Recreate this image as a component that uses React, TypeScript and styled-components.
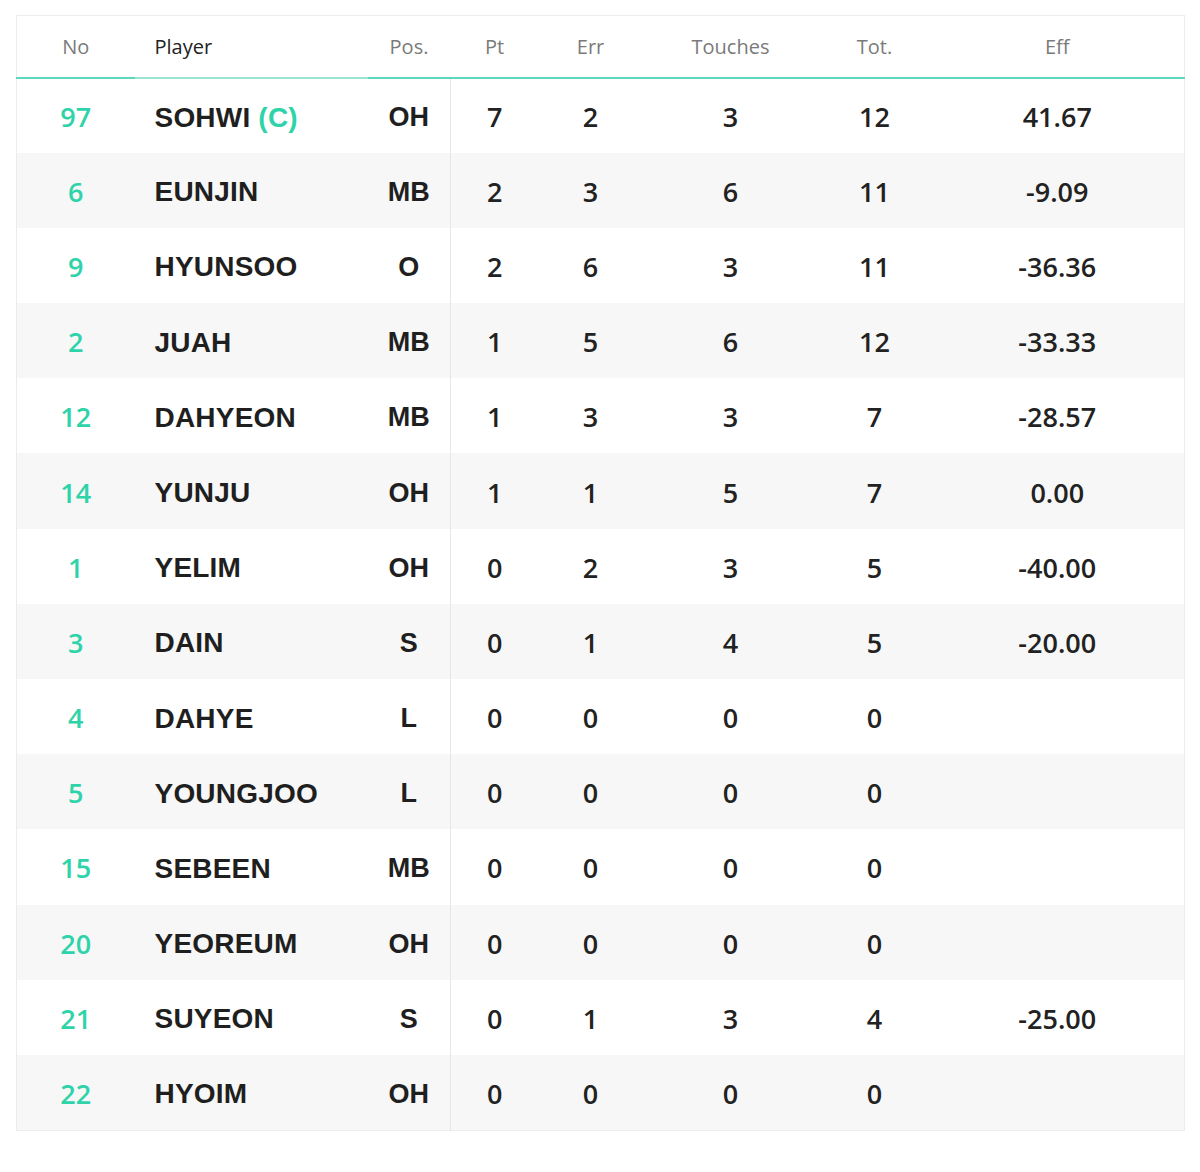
import React from "react";
import styled, { createGlobalStyle } from "styled-components";

const Global = createGlobalStyle`
  html, body { margin: 0; padding: 0; background: #fff; }
  body { font-family: "Open Sans", "Liberation Sans", sans-serif; }
`;

const Page = styled.div`
  padding: 15px 16px 40px 16px;
`;

const Table = styled.table`
  width: 1168px;
  border-collapse: collapse;
  border: 1px solid #ececec;
  table-layout: fixed;
`;

const Th = styled.th<{ $w: number; $align?: string; $dark?: boolean; $light?: boolean }>`
  box-sizing: border-box;
  width: ${(p) => p.$w}px;
  height: 62px;
  padding: 0;
  padding-left: ${(p) => (p.$align === "left" ? "20px" : "0")};
  text-align: ${(p) => p.$align || "center"};
  font-family: "Open Sans", "Liberation Sans", sans-serif;
  font-size: 20px;
  font-weight: 400;
  color: ${(p) => (p.$dark ? "#222" : "#7a7a7a")};
  border-bottom: 2px solid ${(p) => (p.$light ? "#9be3d3" : "#5fd6be")};
`;

const Tr = styled.tr<{ $alt: boolean }>`
  height: 75.2px;
  background: ${(p) => (p.$alt ? "#f7f7f7" : "#ffffff")};
`;

const Td = styled.td<{ $align?: string; $divider?: boolean }>`
  padding: 2px 0 0 0;
  padding-left: ${(p) => (p.$align === "left" ? "20px" : "0")};
  text-align: ${(p) => p.$align || "center"};
  font-family: "Open Sans", "Liberation Sans", sans-serif;
  font-size: 27px;
  font-weight: 600;
  color: #222;
  border-right: ${(p) => (p.$divider ? "1px solid #e6e6e6" : "none")};
`;

const NoCell = styled(Td)`
  color: #2fd3aa;
`;

const NameCell = styled(Td)`
  font-family: "Liberation Sans", Arial, sans-serif;
  font-weight: 700;
  font-size: 28px;
  letter-spacing: 0.2px;
  padding-top: 4px;
  color: #1f1f1f;
`;

const PosCell = styled(Td)`
  font-family: "Liberation Sans", Arial, sans-serif;
  font-weight: 700;
  font-size: 27px;
  padding-top: 4px;
  color: #1f1f1f;
`;

const Captain = styled.span`
  color: #2fd3aa;
`;

type Row = {
  no: number;
  name: string;
  captain?: boolean;
  pos: string;
  pt: number;
  err: number;
  touches: number;
  tot: number;
  eff: string;
};

const rows: Row[] = [
  { no: 97, name: "SOHWI", captain: true, pos: "OH", pt: 7, err: 2, touches: 3, tot: 12, eff: "41.67" },
  { no: 6, name: "EUNJIN", pos: "MB", pt: 2, err: 3, touches: 6, tot: 11, eff: "-9.09" },
  { no: 9, name: "HYUNSOO", pos: "O", pt: 2, err: 6, touches: 3, tot: 11, eff: "-36.36" },
  { no: 2, name: "JUAH", pos: "MB", pt: 1, err: 5, touches: 6, tot: 12, eff: "-33.33" },
  { no: 12, name: "DAHYEON", pos: "MB", pt: 1, err: 3, touches: 3, tot: 7, eff: "-28.57" },
  { no: 14, name: "YUNJU", pos: "OH", pt: 1, err: 1, touches: 5, tot: 7, eff: "0.00" },
  { no: 1, name: "YELIM", pos: "OH", pt: 0, err: 2, touches: 3, tot: 5, eff: "-40.00" },
  { no: 3, name: "DAIN", pos: "S", pt: 0, err: 1, touches: 4, tot: 5, eff: "-20.00" },
  { no: 4, name: "DAHYE", pos: "L", pt: 0, err: 0, touches: 0, tot: 0, eff: "" },
  { no: 5, name: "YOUNGJOO", pos: "L", pt: 0, err: 0, touches: 0, tot: 0, eff: "" },
  { no: 15, name: "SEBEEN", pos: "MB", pt: 0, err: 0, touches: 0, tot: 0, eff: "" },
  { no: 20, name: "YEOREUM", pos: "OH", pt: 0, err: 0, touches: 0, tot: 0, eff: "" },
  { no: 21, name: "SUYEON", pos: "S", pt: 0, err: 1, touches: 3, tot: 4, eff: "-25.00" },
  { no: 22, name: "HYOIM", pos: "OH", pt: 0, err: 0, touches: 0, tot: 0, eff: "" },
];

export default function App() {
  return (
    <Page>
      <Global />
      <Table>
        <thead>
          <tr>
            <Th $w={118}>No</Th>
            <Th $w={233} $align="left" $dark $light>Player</Th>
            <Th $w={83}>Pos.</Th>
            <Th $w={88}>Pt</Th>
            <Th $w={104}>Err</Th>
            <Th $w={176}>Touches</Th>
            <Th $w={112}>Tot.</Th>
            <Th $w={254}>Eff</Th>
          </tr>
        </thead>
        <tbody>
          {rows.map((r, i) => (
            <Tr key={r.no} $alt={i % 2 === 1}>
              <NoCell>{r.no}</NoCell>
              <NameCell $align="left">
                {r.name}
                {r.captain && <Captain> (C)</Captain>}
              </NameCell>
              <PosCell $divider>{r.pos}</PosCell>
              <Td>{r.pt}</Td>
              <Td>{r.err}</Td>
              <Td>{r.touches}</Td>
              <Td>{r.tot}</Td>
              <Td>{r.eff}</Td>
            </Tr>
          ))}
        </tbody>
      </Table>
    </Page>
  );
}
